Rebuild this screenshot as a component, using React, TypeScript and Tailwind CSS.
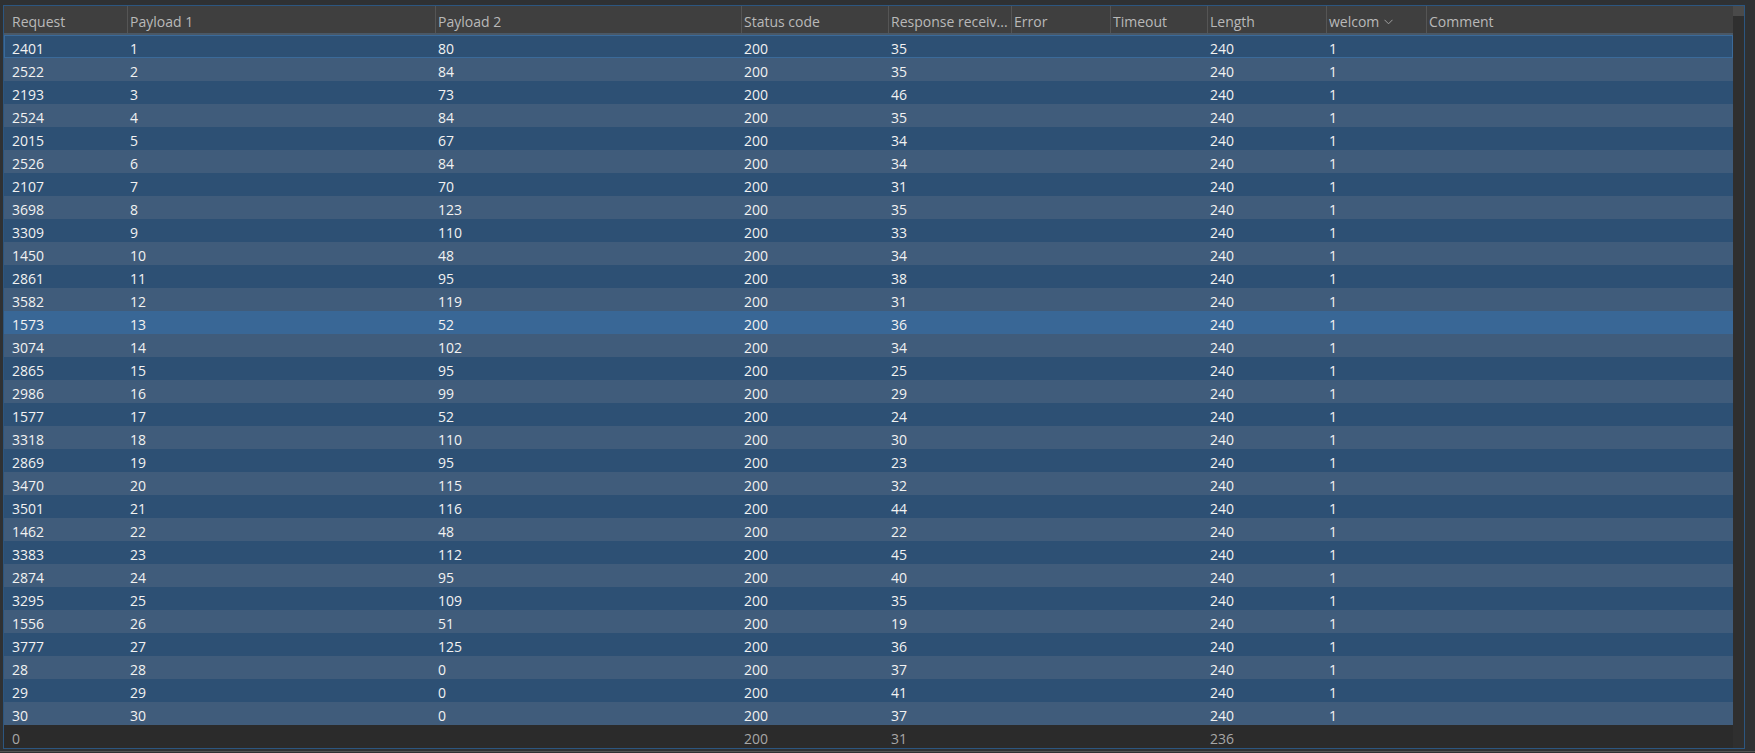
const cols = [
  { name: "Request", w: "w-[123px]" },
  { name: "Payload 1", w: "w-[308px]" },
  { name: "Payload 2", w: "w-[306px]" },
  { name: "Status code", w: "w-[147px]" },
  { name: "Response receiv...", w: "w-[123px]" },
  { name: "Error", w: "w-[99px]" },
  { name: "Timeout", w: "w-[97px]" },
  { name: "Length", w: "w-[119px]" },
  { name: "welcom", w: "w-[100px]" },
  { name: "Comment", w: "w-[307px]" },
];

const data: [number, number, number, number][] = [
  [2401, 1, 80, 35],
  [2522, 2, 84, 35],
  [2193, 3, 73, 46],
  [2524, 4, 84, 35],
  [2015, 5, 67, 34],
  [2526, 6, 84, 34],
  [2107, 7, 70, 31],
  [3698, 8, 123, 35],
  [3309, 9, 110, 33],
  [1450, 10, 48, 34],
  [2861, 11, 95, 38],
  [3582, 12, 119, 31],
  [1573, 13, 52, 36],
  [3074, 14, 102, 34],
  [2865, 15, 95, 25],
  [2986, 16, 99, 29],
  [1577, 17, 52, 24],
  [3318, 18, 110, 30],
  [2869, 19, 95, 23],
  [3470, 20, 115, 32],
  [3501, 21, 116, 44],
  [1462, 22, 48, 22],
  [3383, 23, 112, 45],
  [2874, 24, 95, 40],
  [3295, 25, 109, 35],
  [1556, 26, 51, 19],
  [3777, 27, 125, 36],
  [28, 28, 0, 37],
  [29, 29, 0, 41],
  [30, 30, 0, 37],
];

const Chevron = () => (
  <svg width="9" height="6" viewBox="0 0 9 6" className="ml-[5px] mt-[1px]">
    <path d="M0.5 0.8 L4.5 4.8 L8.5 0.8" fill="none" stroke="#a0a0a0" strokeWidth="1" />
  </svg>
);

function Row({ cells, bg, focus, text }: { cells: (string | number)[]; bg: string; focus?: boolean; text: string }) {
  return (
    <div className={`flex h-[23px] ${bg} ${text} ${focus ? "shadow-[inset_0_0_0_1px_#3b6a99]" : ""}`}>
      {cols.map((c, i) => (
        <div
          key={c.name}
          className={`${c.w} shrink-0 whitespace-nowrap overflow-hidden leading-[19px] pt-[4px] ${i === 0 ? "pl-2" : "pl-[3px]"}`}
        >
          {cells[i] ?? ""}
        </div>
      ))}
    </div>
  );
}

export default function App() {
  return (
    <div className="w-[1755px] h-[753px] bg-[#2f3133] pt-[5px] overflow-hidden font-['Open_Sans','Noto_Sans',sans-serif] text-[14px]">
      <div className="ml-[3px] w-[1742px] h-[744px] border border-[#2c5680] flex">
        <div className="w-[1729px] flex flex-col">
          {/* header */}
          <div className="flex h-[29px] bg-[#3f3f3f] border-b-2 border-[#4a5866] text-[#b9b9b9]">
            {cols.map((c, i) => (
              <div
                key={c.name}
                className={`${c.w} shrink-0 flex items-center whitespace-nowrap overflow-hidden leading-[20px] pt-[4px] ${i === 0 ? "pl-2" : "pl-[2px] border-l border-[#555555]"}`}
              >
                <span>{c.name}</span>
                {c.name === "welcom" && <Chevron />}
              </div>
            ))}
          </div>
          {/* rows */}
          {data.map((r, i) => {
            const sel = r[0] === 1573;
            const bg = sel ? "bg-[#396796]" : i % 2 === 0 ? "bg-[#2d5074]" : "bg-[#405c7b]";
            return (
              <Row
                key={i}
                cells={[r[0], r[1], r[2], 200, r[3], "", "", 240, 1, ""]}
                bg={bg}
                focus={i === 0}
                text="text-[#f2f2f2]"
              />
            );
          })}
          {/* footer */}
          <Row cells={[0, "", "", 200, 31, "", "", 236, "", ""]} bg="bg-[#2b2b2b]" text="text-[#a7a7a7]" />
        </div>
        {/* scrollbar */}
        <div className="w-[11px] bg-[#2f2f2f] flex flex-col">
          <div className="h-[10px] bg-[#4a4a4a]" />
        </div>
      </div>
      <div className="mt-[2px] h-[1px] bg-[#555555]" />
    </div>
  );
}
